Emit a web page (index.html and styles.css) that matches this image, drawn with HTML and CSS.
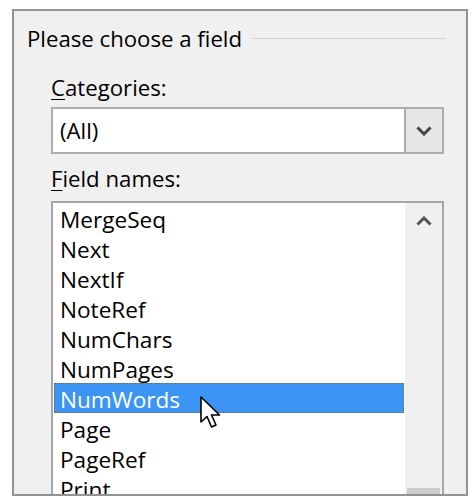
FILE: index.html
```html
<!DOCTYPE html>
<html>
<head>
<meta charset="utf-8">
<link rel="stylesheet" href="styles.css">
</head>
<body>
<div class="frame">
  <div class="title-row">
    <span class="title">Please choose a field</span>
    <span class="title-line"></span>
  </div>
  <div class="section">
    <div class="label label-cat"><u>C</u>ategories:</div>
    <div class="combo">
      <div class="combo-value">(All)</div>
      <div class="combo-btn">
        <svg width="16" height="10" viewBox="0 0 16 10"><path d="M1.5 1.5 L8 8 L14.5 1.5" fill="none" stroke="#444" stroke-width="3"/></svg>
      </div>
    </div>
    <div class="label label-field"><u>F</u>ield names:</div>
    <div class="listbox">
      <ul class="items">
        <li>MergeSeq</li>
        <li>Next</li>
        <li>NextIf</li>
        <li>NoteRef</li>
        <li>NumChars</li>
        <li>NumPages</li>
        <li class="selected">NumWords</li>
        <li>Page</li>
        <li>PageRef</li>
        <li>Print</li>
      </ul>
      <div class="scrollbar">
        <div class="arrow-up">
          <svg width="16" height="10" viewBox="0 0 16 10"><path d="M1.5 8.5 L8 2 L14.5 8.5" fill="none" stroke="#555" stroke-width="3"/></svg>
        </div>
        <div class="thumb"></div>
      </div>
    </div>
  </div>
</div>
<svg class="cursor" width="24" height="34" viewBox="0 0 24 34">
  <path d="M1 1 L1 26 L7 20.5 L11.5 31 L16 29 L11.5 19 L19.5 19 Z" fill="#fff" stroke="#000" stroke-width="1.6" stroke-linejoin="round"/>
</svg>
</body>
</html>
```
FILE: styles.css
```css
html, body {
  margin: 0;
  padding: 0;
  background: #ffffff;
}
body {
  font-family: "Open Sans", "Noto Sans", sans-serif;
  font-size: 22.2px;
  color: #000;
  position: relative;
  width: 474px;
  height: 502px;
  overflow: hidden;
}
.frame {
  box-sizing: border-box;
  margin: 9px 0 0 12px;
  width: 456px;
  height: 487px;
  border: 2px solid #939393;
  background: #f0f0f0;
  overflow: hidden;
}
.title-row {
  display: flex;
  align-items: center;
  padding: 13px 20px 0 13px;
  height: 30px;
}
.title {
  line-height: 30px;
  white-space: nowrap;
}
.title-line {
  flex: 1;
  height: 0;
  border-top: 1px solid #d3d3d3;
  margin-left: 10px;
  margin-top: -1px;
}
.section {
  margin-left: 37px;
}
.label {
  line-height: 30px;
}
.label u {
  text-underline-offset: 3px;
  text-decoration-thickness: 1px;
}
.label-cat {
  margin-top: 19px;
  margin-bottom: 4px;
}
.label-field {
  margin-top: 10px;
  margin-bottom: 7px;
}
.combo {
  box-sizing: border-box;
  width: 393px;
  height: 47px;
  border: 2px solid #adadad;
  background: #fff;
  display: flex;
}
.combo-value {
  flex: 1;
  line-height: 43px;
  padding-left: 7px;
}
.combo-btn {
  width: 36px;
  border-left: 2px solid #adadad;
  background: #e6e6e6;
  display: flex;
  align-items: center;
  justify-content: center;
}
.listbox {
  box-sizing: border-box;
  width: 393px;
  height: 330px;
  border: 2px solid #a6a6a6;
  background: #fff;
  display: flex;
}
.items {
  list-style: none;
  margin: 0;
  padding: 0;
  flex: 1;
}
.items li {
  box-sizing: border-box;
  height: 30px;
  line-height: 33px;
  margin: 0 1px;
  padding-left: 6px;
  font-size: 22.6px;
}
.items li.selected {
  background: #3c94f5;
  color: #fff;
  border: 1px dotted #7a6a4a;
  line-height: 31px;
  padding-left: 5px;
}
.scrollbar {
  width: 37px;
  background: #f0f0f0;
  display: flex;
  flex-direction: column;
  align-items: center;
}
.arrow-up {
  height: 36px;
  display: flex;
  align-items: center;
  justify-content: center;
}
.thumb {
  margin-top: 249px;
  width: 33px;
  height: 40px;
  background: #cdcdcd;
}
.cursor {
  position: absolute;
  left: 200px;
  top: 396px;
}
```
